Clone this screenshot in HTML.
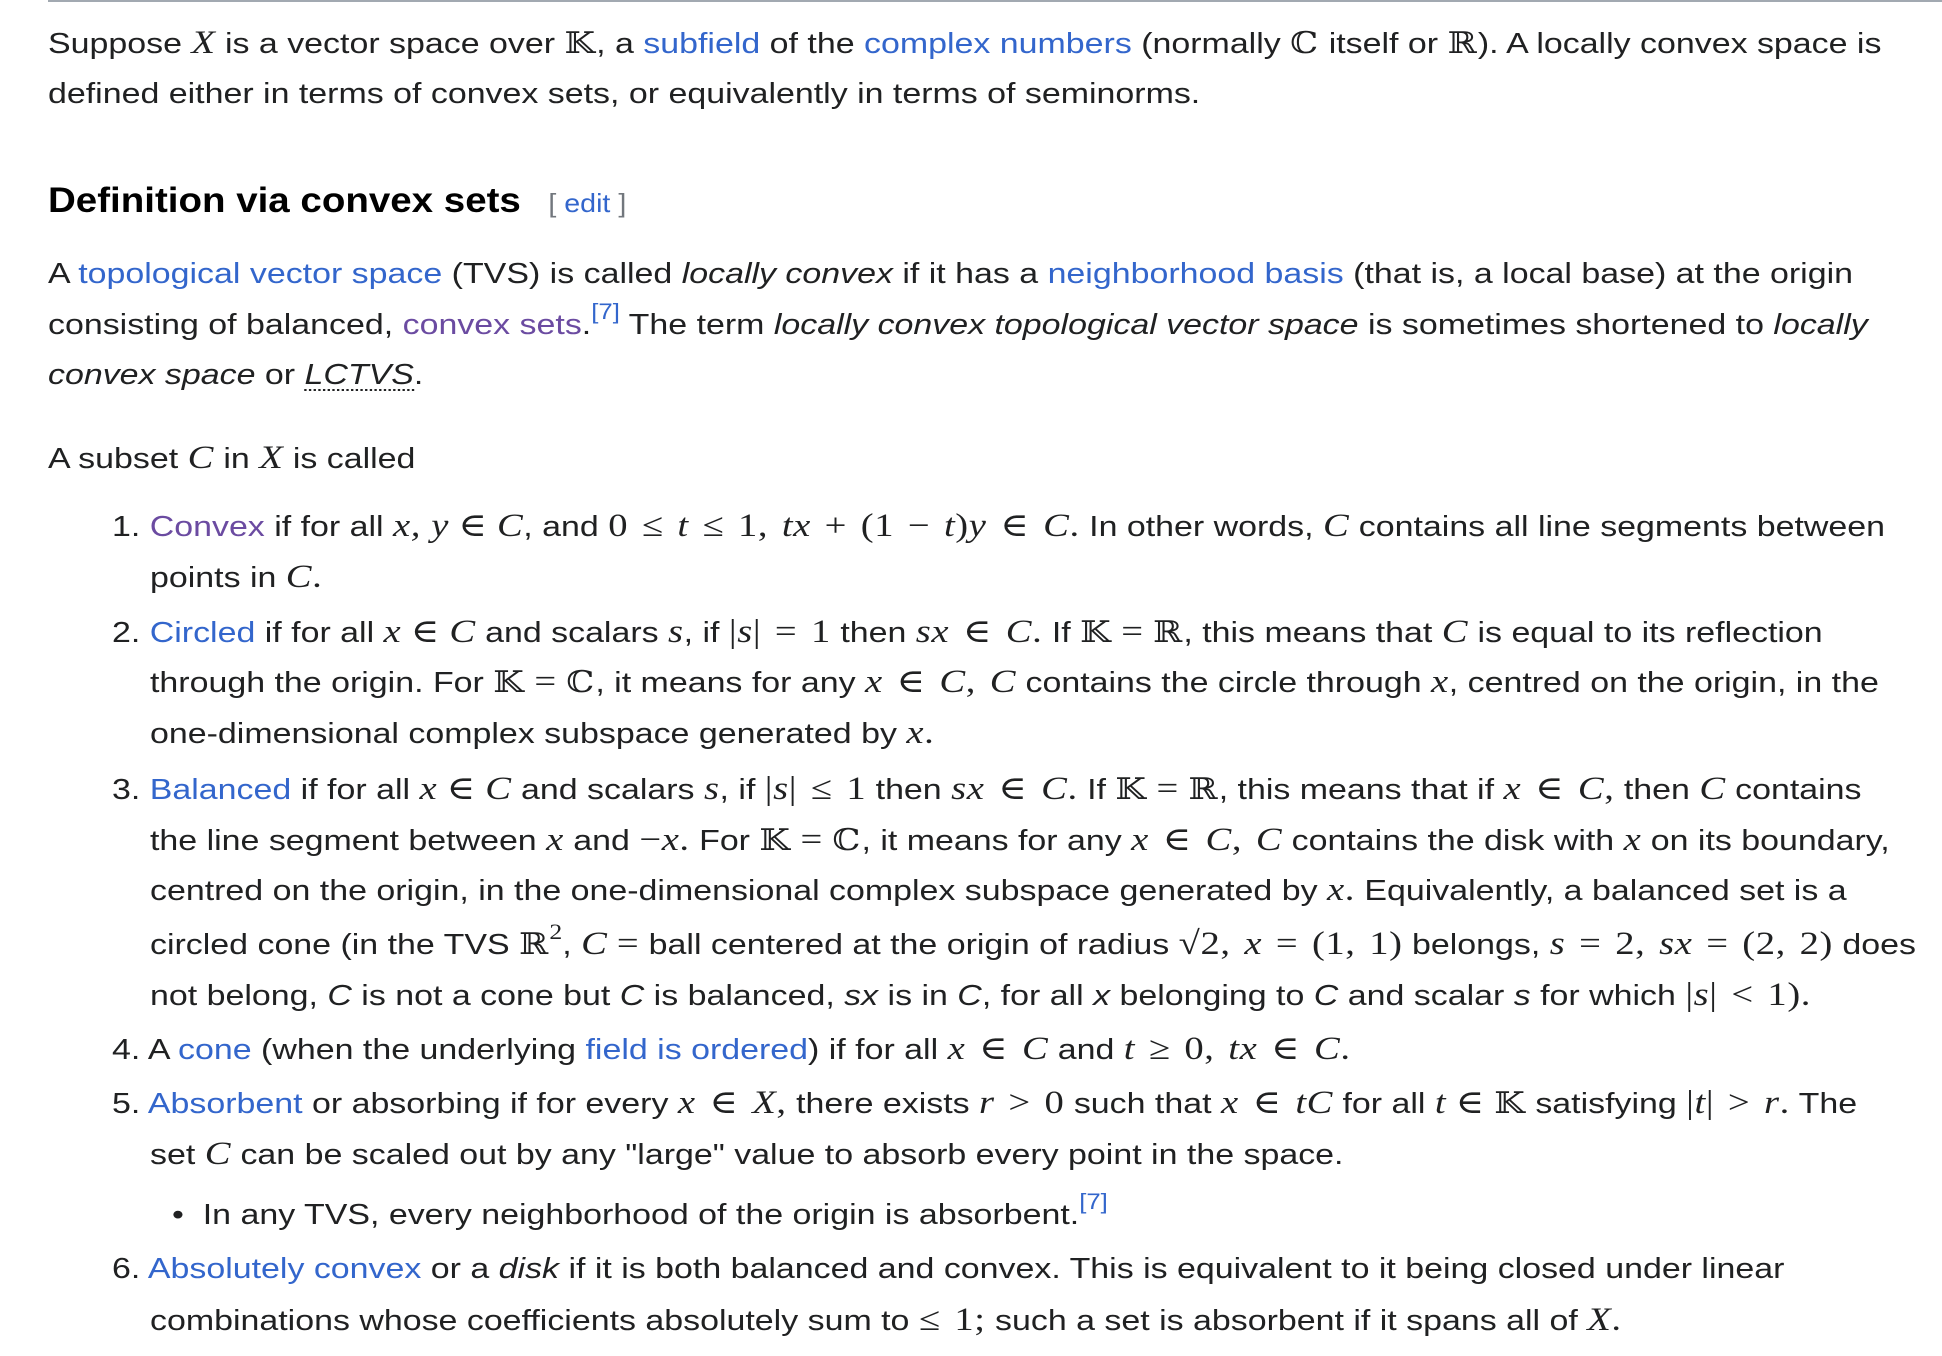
<!DOCTYPE html>
<html><head><meta charset="utf-8"><style>
html,body{margin:0;padding:0;background:#fff;width:1942px;height:1356px;overflow:hidden}
body{font-family:"Liberation Sans","DejaVu Sans",sans-serif;color:#202122;font-size:29px;position:relative}
.l{position:absolute;white-space:nowrap;line-height:50px;height:50px;transform:scaleX(1.17);transform-origin:0 0}
.a{color:#3366cc}.v{color:#6b4ba1}
.m{font-family:"Liberation Serif","DejaVu Serif",serif;font-style:italic;font-size:33px;letter-spacing:0.5px}
.r{font-family:"Liberation Serif","DejaVu Serif",serif;font-size:33px;letter-spacing:0.5px;word-spacing:3px}
.b{font-family:"DejaVu Serif",serif;font-size:30px;letter-spacing:1px}
i{font-style:italic}
sup{font-size:22px;line-height:0;vertical-align:15px}
h3{position:absolute;left:48px;top:176px;margin:0;font-size:35px;font-weight:bold;color:#000;white-space:nowrap;line-height:50px;transform:scaleX(1.1);transform-origin:0 0}
h3 span{font-weight:normal;font-size:26px;color:#72777d;margin-left:25px}
</style></head><body>
<div style="position:absolute;left:48px;right:0;top:0;height:2px;background:#a2a9b1"></div>
<div class="l" style="left:48px;top:18px">Suppose <span class="m">X</span> is a vector space over <span class="b">𝕂</span>, a <span class="a">subfield</span> of the <span class="a">complex numbers</span> (normally <span class="b">ℂ</span> itself or <span class="b">ℝ</span>). A locally convex space is</div>
<div class="l" style="left:48px;top:69px">defined either in terms of convex sets, or equivalently in terms of seminorms.</div>
<h3>Definition via convex sets<span>[ <span style="color:#3366cc;margin:0;font-size:26px">edit</span> ]</span></h3>
<div class="l" style="left:48px;top:249px">A <span class="a">topological vector space</span> (TVS) is called <i>locally convex</i> if it has a <span class="a">neighborhood basis</span> (that is, a local base) at the origin</div>
<div class="l" style="left:48px;top:300px">consisting of balanced, <span class="v">convex sets</span>.<sup class="a">[7]</sup> The term <i>locally convex topological vector space</i> is sometimes shortened to <i>locally</i></div>
<div class="l" style="left:48px;top:350px"><i>convex space</i> or <i style="border-bottom:2px dotted #202122;line-height:28px;display:inline-block">LCTVS</i>.</div>
<div class="l" style="left:48px;top:433px">A subset <span class="m">C</span> in <span class="m">X</span> is called</div>

<div class="l" style="left:112px;top:501px">1. <span class="v">Convex</span> if for all <span class="m">x, y</span> <span class="r">∈</span> <span class="m">C</span>, and <span class="r">0 ≤ <i>t</i> ≤ 1, <i>tx</i> + (1 − <i>t</i>)<i>y</i> ∈ <i>C</i>.</span> In other words, <span class="m">C</span> contains all line segments between</div>
<div class="l" style="left:150px;top:552px">points in <span class="m">C</span><span class="r">.</span></div>
<div class="l" style="left:112px;top:607px">2. <span class="a">Circled</span> if for all <span class="m">x</span> <span class="r">∈</span> <span class="m">C</span> and scalars <span class="m">s</span>, if <span class="r">|<i>s</i>| = 1</span> then <span class="r"><i>sx</i> ∈ <i>C</i>.</span> If <span class="b">𝕂</span> <span class="r">=</span> <span class="b">ℝ</span>, this means that <span class="m">C</span> is equal to its reflection</div>
<div class="l" style="left:150px;top:657px">through the origin. For <span class="b">𝕂</span> <span class="r">=</span> <span class="b">ℂ</span>, it means for any <span class="r"><i>x</i> ∈ <i>C</i>, <i>C</i></span> contains the circle through <span class="m">x</span>, centred on the origin, in the</div>
<div class="l" style="left:150px;top:708px">one-dimensional complex subspace generated by <span class="m">x</span><span class="r">.</span></div>
<div class="l" style="left:112px;top:764px">3. <span class="a">Balanced</span> if for all <span class="m">x</span> <span class="r">∈</span> <span class="m">C</span> and scalars <span class="m">s</span>, if <span class="r">|<i>s</i>| ≤ 1</span> then <span class="r"><i>sx</i> ∈ <i>C</i>.</span> If <span class="b">𝕂</span> <span class="r">=</span> <span class="b">ℝ</span>, this means that if <span class="r"><i>x</i> ∈ <i>C</i>,</span> then <span class="m">C</span> contains</div>
<div class="l" style="left:150px;top:815px">the line segment between <span class="m">x</span> and <span class="r">−<i>x</i>.</span> For <span class="b">𝕂</span> <span class="r">=</span> <span class="b">ℂ</span>, it means for any <span class="r"><i>x</i> ∈ <i>C</i>, <i>C</i></span> contains the disk with <span class="m">x</span> on its boundary,</div>
<div class="l" style="left:150px;top:865px">centred on the origin, in the one-dimensional complex subspace generated by <span class="m">x</span><span class="r">.</span> Equivalently, a balanced set is a</div>
<div class="l" style="left:150px;top:919px">circled cone (in the TVS <span class="b">ℝ</span><sup style="font-family:'Liberation Serif',serif;color:#202122">2</sup>, <span class="m">C</span> <span class="r">=</span> ball centered at the origin of radius <span class="r">√2, <i>x</i> = (1, 1)</span> belongs, <span class="r"><i>s</i> = 2, <i>sx</i> = (2, 2)</span> does</div>
<div class="l" style="left:150px;top:970px">not belong, <i>C</i> is not a cone but <i>C</i> is balanced, <i>sx</i> is in <i>C</i>, for all <i>x</i> belonging to <i>C</i> and scalar <i>s</i> for which <span class="r">|<i>s</i>| &lt; 1).</span></div>
<div class="l" style="left:112px;top:1024px">4. A <span class="a">cone</span> (when the underlying <span class="a">field is ordered</span>) if for all <span class="r"><i>x</i> ∈ <i>C</i></span> and <span class="r"><i>t</i> ≥ 0, <i>tx</i> ∈ <i>C</i>.</span></div>
<div class="l" style="left:112px;top:1078px">5. <span class="a">Absorbent</span> or absorbing if for every <span class="r"><i>x</i> ∈ <i>X</i>,</span> there exists <span class="r"><i>r</i> &gt; 0</span> such that <span class="r"><i>x</i> ∈ <i>tC</i></span> for all <span class="m">t</span> <span class="r">∈</span> <span class="b">𝕂</span> satisfying <span class="r">|<i>t</i>| &gt; <i>r</i>.</span> The</div>
<div class="l" style="left:150px;top:1129px">set <span class="m">C</span> can be scaled out by any "large" value to absorb every point in the space.</div>
<div class="l" style="left:172px;top:1190px">•&nbsp; In any TVS, every neighborhood of the origin is absorbent.<sup class="a">[7]</sup></div>
<div class="l" style="left:112px;top:1244px">6. <span class="a">Absolutely convex</span> or a <i>disk</i> if it is both balanced and convex. This is equivalent to it being closed under linear</div>
<div class="l" style="left:150px;top:1295px">combinations whose coefficients absolutely sum to <span class="r">≤ 1;</span> such a set is absorbent if it spans all of <span class="m">X</span><span class="r">.</span></div>
</body></html>
